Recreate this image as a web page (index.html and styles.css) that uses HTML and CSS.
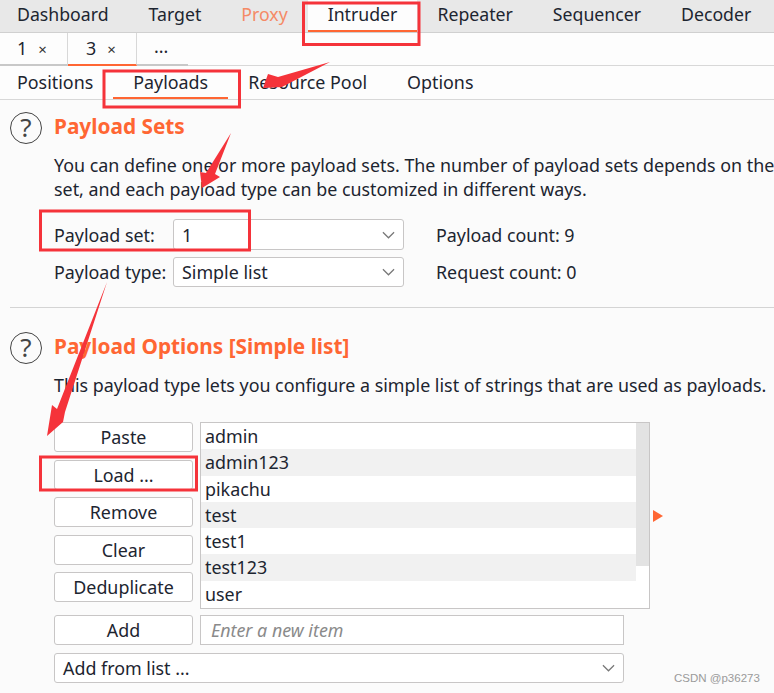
FILE: index.html
```html
<!DOCTYPE html>
<html lang="en">
<head>
    <meta charset="UTF-8">
    <meta name="viewport" content="width=device-width, initial-scale=1.0">
    <title>Intruder Payloads</title>
    <link rel="stylesheet" href="styles.css">
</head>
<body>
    <div class="main-tabs">
        <div class="main-tab">Dashboard</div>
        <div class="main-tab">Target</div>
        <div class="main-tab proxy">Proxy</div>
        <div class="main-tab active">Intruder</div>
        <div class="main-tab">Repeater</div>
        <div class="main-tab">Sequencer</div>
        <div class="main-tab">Decoder</div>
    </div>

    <div class="attack-tabs">
        <div class="attack-tab">1<span class="close">×</span></div>
        <div class="attack-tab active">3<span class="close">×</span></div>
        <div class="attack-tab more">...</div>
    </div>

    <div class="sub-tabs">
        <div class="sub-tab">Positions</div>
        <div class="sub-tab active">Payloads</div>
        <div class="sub-tab">Resource Pool</div>
        <div class="sub-tab">Options</div>
    </div>

    <div class="section first">
        <div class="section-head">
            <div class="help">?</div>
            <h2>Payload Sets</h2>
        </div>
        <p>You can define one or more payload sets. The number of payload sets depends on the<br>set, and each payload type can be customized in different ways.</p>
        <div class="set-row">
            <span class="set-label">Payload set:</span>
            <div class="select set-select">1<svg class="chev" viewBox="0 0 14 8"><path d="M1 1l6 6 6-6"/></svg></div>
            <span class="set-info">Payload count: 9</span>
        </div>
        <div class="set-row">
            <span class="set-label">Payload type:</span>
            <div class="select set-select">Simple list<svg class="chev" viewBox="0 0 14 8"><path d="M1 1l6 6 6-6"/></svg></div>
            <span class="set-info">Request count: 0</span>
        </div>
    </div>

    <div class="section">
        <div class="section-head">
            <div class="help">?</div>
            <h2>Payload Options [Simple list]</h2>
        </div>
        <p>This payload type lets you configure a simple list of strings that are used as payloads.</p>
        <div class="list-area">
            <div class="buttons">
                <div class="btn">Paste</div>
                <div class="btn">Load ...</div>
                <div class="btn">Remove</div>
                <div class="btn">Clear</div>
                <div class="btn">Deduplicate</div>
            </div>
            <div class="list">
                <div class="rows">
                    <div class="row">admin</div>
                    <div class="row">admin123</div>
                    <div class="row">pikachu</div>
                    <div class="row">test</div>
                    <div class="row">test1</div>
                    <div class="row">test123</div>
                    <div class="row">user</div>
                </div>
                <div class="scroll"><div class="thumb"></div></div>
            </div>
            <div class="marker"></div>
        </div>
        <div class="add-row">
            <div class="btn">Add</div>
            <div class="new-item">Enter a new item</div>
        </div>
        <div class="select from-list">Add from list ...<svg class="chev" viewBox="0 0 14 8"><path d="M1 1l6 6 6-6"/></svg></div>
    </div>

    <!-- red annotations drawn on top of the screenshot -->
    <svg class="marks" viewBox="0 0 774 693">
        <rect x="303.5" y="3" width="115.500" height="41.500"/>
        <rect x="104" y="71" width="135.500" height="36"/>
        <rect x="40.500" y="211" width="209" height="39"/>
        <rect x="40.500" y="457" width="156" height="33"/>
        <polygon points="330,62 282,87 263,88 268,74 278,77"/>
        <polygon points="231,133 215,174 220,177 202,188 200,172 206,173"/>
        <polygon points="107,282 65,412 63,422 47,436 52,405 57,409"/>
    </svg>

    <div class="watermark">CSDN @p36273</div>
</body>
</html>
```

FILE: styles.css
```css
* {
    box-sizing: border-box;
}

html, body {
    margin: 0;
    height: 693px;
    overflow: hidden;
}

body {
    position: relative;
    font-family: 'Noto Sans', sans-serif;
    font-size: 17.870px;
    color: #1d2530;
    background: #fbfbfb;
}

.main-tabs {
    display: flex;
    height: 33px;
    background: #e8e8e8;
    border-bottom: 1px solid #d0d0d0;
    font-size: 17.700px;
}

.main-tab {
    padding: 0 20px;
    height: 32px;
    line-height: 29px;
}

.main-tab:first-child {
    padding-left: 17px;
}

.main-tab.proxy {
    color: #f58a66;
}

.main-tab.active {
    background: #fdfdfd;
    border-bottom: 2px solid #ff6633;
}

.attack-tabs {
    display: flex;
    height: 33px;
    background: #fdfdfd;
    border-bottom: 1px solid #d8d8d8;
}

.attack-tab {
    width: 68px;
    padding-left: 17px;
    line-height: 30px;
    border-right: 1px solid #d8d8d8;
    border-bottom: 2px solid #c8c8c8;
    height: 33px;
}

.attack-tab.active {
    width: 69px;
    padding-left: 18px;
    border-bottom-color: #ff6633;
}

.attack-tab.more {
    width: 51px;
    border-right: 0;
    line-height: 26px;
}

.close {
    margin-left: 11px;
    font-size: 15px;
    color: #333;
}

.sub-tabs {
    display: flex;
    height: 34px;
    border-bottom: 1px solid #d8d8d8;
    background: #fdfdfd;
}

.sub-tab {
    padding: 0 20px;
    height: 33px;
    line-height: 32px;
}

.sub-tab:first-child {
    padding-left: 17px;
}

.sub-tab.active {
    border-bottom: 2px solid #ff6633;
}

.section {
    padding: 24px 0 0 10px;
}

.section.first {
    padding-top: 12px;
    height: 208px;
    border-bottom: 1px solid #d4d4d4;
    margin-left: 10px;
    padding-left: 0;
}

.section-head {
    display: flex;
    align-items: center;
    height: 32px;
    gap: 12px;
}

.help {
    width: 32px;
    height: 32px;
    border: 1.500px solid #444;
    border-radius: 50%;
    text-align: center;
    line-height: 28px;
    font-size: 26px;
    color: #444;
}

h2 {
    margin: 0 0 4px;
    font-size: 20.800px;
    font-weight: 700;
    color: #ff6633;
}

p {
    margin: 9px 0 0 44px;
    line-height: 24px;
    white-space: nowrap;
}

.set-row {
    display: flex;
    align-items: center;
    height: 31px;
    margin: 18px 0 -11px 44px;
}

.set-row + .set-row {
    height: 30px;
}

.set-label {
    width: 119px;
}

.select {
    display: flex;
    align-items: center;
    justify-content: space-between;
    padding: 0 8px 0 8px;
    background: #fff;
    border: 1px solid #c8c6c6;
    border-radius: 3px;
}

.set-select {
    width: 231px;
    height: 100%;
}

.set-info {
    margin-left: 32px;
}

.chev {
    width: 13px;
    height: 8px;
    fill: none;
    stroke: #777;
    stroke-width: 1.300;
}

.list-area {
    display: flex;
    gap: 7px;
    margin: 25px 0 0 44px;
}

.buttons {
    display: flex;
    flex-direction: column;
    gap: 7.500px;
    width: 139px;
}

.btn {
    height: 30px;
    width: 139px;
    line-height: 28px;
    text-align: center;
    background: #fff;
    border: 1px solid #c8c6c6;
    border-radius: 3px;
}

.list {
    display: flex;
    width: 450px;
    height: 187px;
    background: #fff;
    border: 1px solid #c8c6c6;
}

.rows {
    flex: 1;
}

.row {
    height: 26.300px;
    line-height: 27px;
    padding-left: 4px;
}

.row:nth-child(even) {
    background: #f1f1f1;
}

.scroll {
    width: 13px;
}

.thumb {
    height: 143px;
    background: #e3e3e3;
}

.marker {
    align-self: center;
    margin-left: -4px;
    border-left: 10px solid #ff6633;
    border-top: 6px solid transparent;
    border-bottom: 6px solid transparent;
}

.add-row {
    display: flex;
    gap: 7px;
    margin: 6px 0 0 44px;
}

.new-item {
    width: 424px;
    height: 30px;
    padding-left: 10px;
    line-height: 29px;
    font-style: italic;
    color: #8a8a8a;
    background: #fff;
    border: 1px solid #c8c6c6;
}

.from-list {
    width: 570px;
    height: 30px;
    margin: 8px 0 0 44px;
}

.marks {
    position: absolute;
    left: 0;
    top: 0;
    width: 774px;
    height: 693px;
}

.marks rect {
    fill: none;
    stroke: #f5333a;
    stroke-width: 3;
}

.marks polygon {
    fill: #f5333a;
}

.watermark {
    position: absolute;
    left: 674px;
    top: 672px;
    font-family: 'Liberation Sans', sans-serif;
    font-size: 11.500px;
    color: #9a9a9a;
}
```
